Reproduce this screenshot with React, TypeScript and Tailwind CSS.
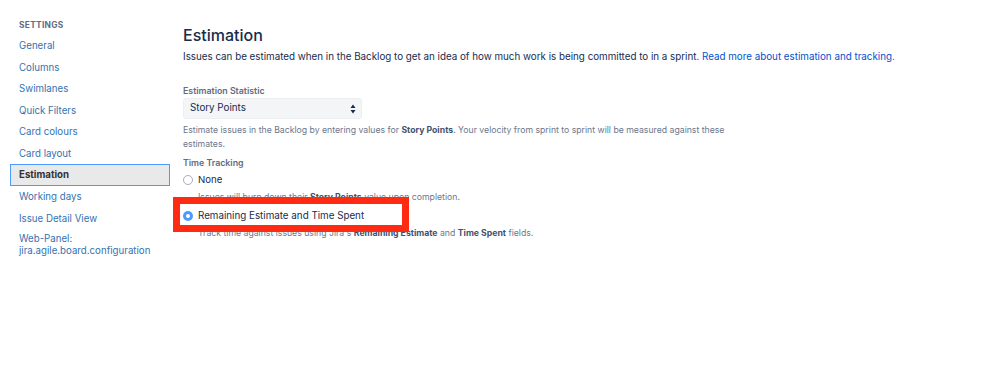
import React from "react";

const links = ["General", "Columns", "Swimlanes", "Quick Filters", "Card colours", "Card layout"];
const links2 = ["Working days", "Issue Detail View"];

export default function App() {
  return (
    <div className="w-[999px] h-[365px] bg-white flex text-[#172b4d]" style={{ fontFamily: "Inter, 'Noto Sans', sans-serif" }}>
      <div className="w-[183px] shrink-0 pl-[10px] pr-[13px] pt-[19px]">
        <div className="pl-[9px] text-[8.4px] font-bold tracking-[0.3px] text-[#5e6c84] h-[12px] leading-[12px] mb-[4px]">SETTINGS</div>
        {links.map((l) => (
          <div key={l} className="pl-[9px] h-[21.5px] leading-[21.5px] text-[9.7px] text-[#3572b0]">{l}</div>
        ))}
        <div className="h-[22px] leading-[20px] pl-[8px] text-[9.7px] font-bold text-[#333] bg-[#e9e9e9] border border-[#4c9aff]">Estimation</div>
        {links2.map((l) => (
          <div key={l} className="pl-[9px] h-[21.5px] leading-[21.5px] text-[9.7px] text-[#3572b0]">{l}</div>
        ))}
        <div className="pl-[9px] pt-[4px] text-[9.7px] leading-[12px] text-[#3572b0]">Web-Panel:<br />jira.agile.board.configuration</div>
      </div>
      <div className="flex-1 pt-[25px]">
        <h1 className="text-[16px] leading-[20px] font-medium text-[#172b4d]">Estimation</h1>
        <p className="mt-[4px] text-[9.8px] leading-[16px] text-[#172b4d] whitespace-nowrap">
          Issues can be estimated when in the Backlog to get an idea of how much work is being committed to in a sprint.{" "}
          <span className="text-[#0052cc]">Read more about estimation and tracking.</span>
        </p>
        <div className="mt-[20px] text-[8.8px] font-semibold leading-[12px] text-[#5e6c84]">Estimation Statistic</div>
        <div className="mt-[1px] w-[179px] h-[21px] rounded-[3px] bg-[#f4f5f7] border border-[#eceef1] flex items-center justify-between pl-[6px] pr-[5px]">
          <span className="text-[9.8px] text-[#172b4d]">Story Points</span>
          <svg width="6" height="10" viewBox="0 0 6 10"><path d="M3 0.5L5.5 4H0.5Z M3 9.5L0.5 6H5.5Z" fill="#172b4d" /></svg>
        </div>
        <p className="mt-[4px] text-[8.7px] leading-[14px] text-[#6b778c] whitespace-nowrap">
          Estimate issues in the Backlog by entering values for <b className="text-[#42526e]">Story Points</b>. Your velocity from sprint to sprint will be measured against these
          <br />
          estimates.
        </p>
        <div className="mt-[6px] text-[8.8px] font-semibold leading-[12px] text-[#5e6c84]">Time Tracking</div>
        <div className="mt-[3px] flex items-center h-[16px]">
          <span className="w-[10px] h-[10px] rounded-full border border-[#a5adba] bg-white shrink-0" />
          <span className="ml-[5px] text-[9.6px] text-[#172b4d]">None</span>
        </div>
        <p className="mt-[2px] pl-[15px] text-[8.7px] leading-[14px] text-[#6b778c]">
          Issues will burn down their <b className="text-[#42526e]">Story Points</b> value upon completion.
        </p>
        <div className="relative mt-[4px] flex items-center h-[16px]">
          <span className="w-[10px] h-[10px] rounded-full bg-[#4c9aff] shrink-0 flex items-center justify-center">
            <span className="w-[4px] h-[4px] rounded-full bg-white" />
          </span>
          <span className="ml-[5px] text-[9.8px] text-[#172b4d]">Remaining Estimate and Time Spent</span>
          <div className="absolute left-[-10px] top-[-11px] w-[236px] h-[35px] border-[7px] border-[#fe2a12] pointer-events-none" />
        </div>
        <p className="mt-[2px] pl-[15px] text-[8.7px] leading-[14px] text-[#6b778c]">
          Track time against issues using Jira's <b className="text-[#42526e]">Remaining Estimate</b> and <b className="text-[#42526e]">Time Spent</b> fields.
        </p>
      </div>
    </div>
  );
}
